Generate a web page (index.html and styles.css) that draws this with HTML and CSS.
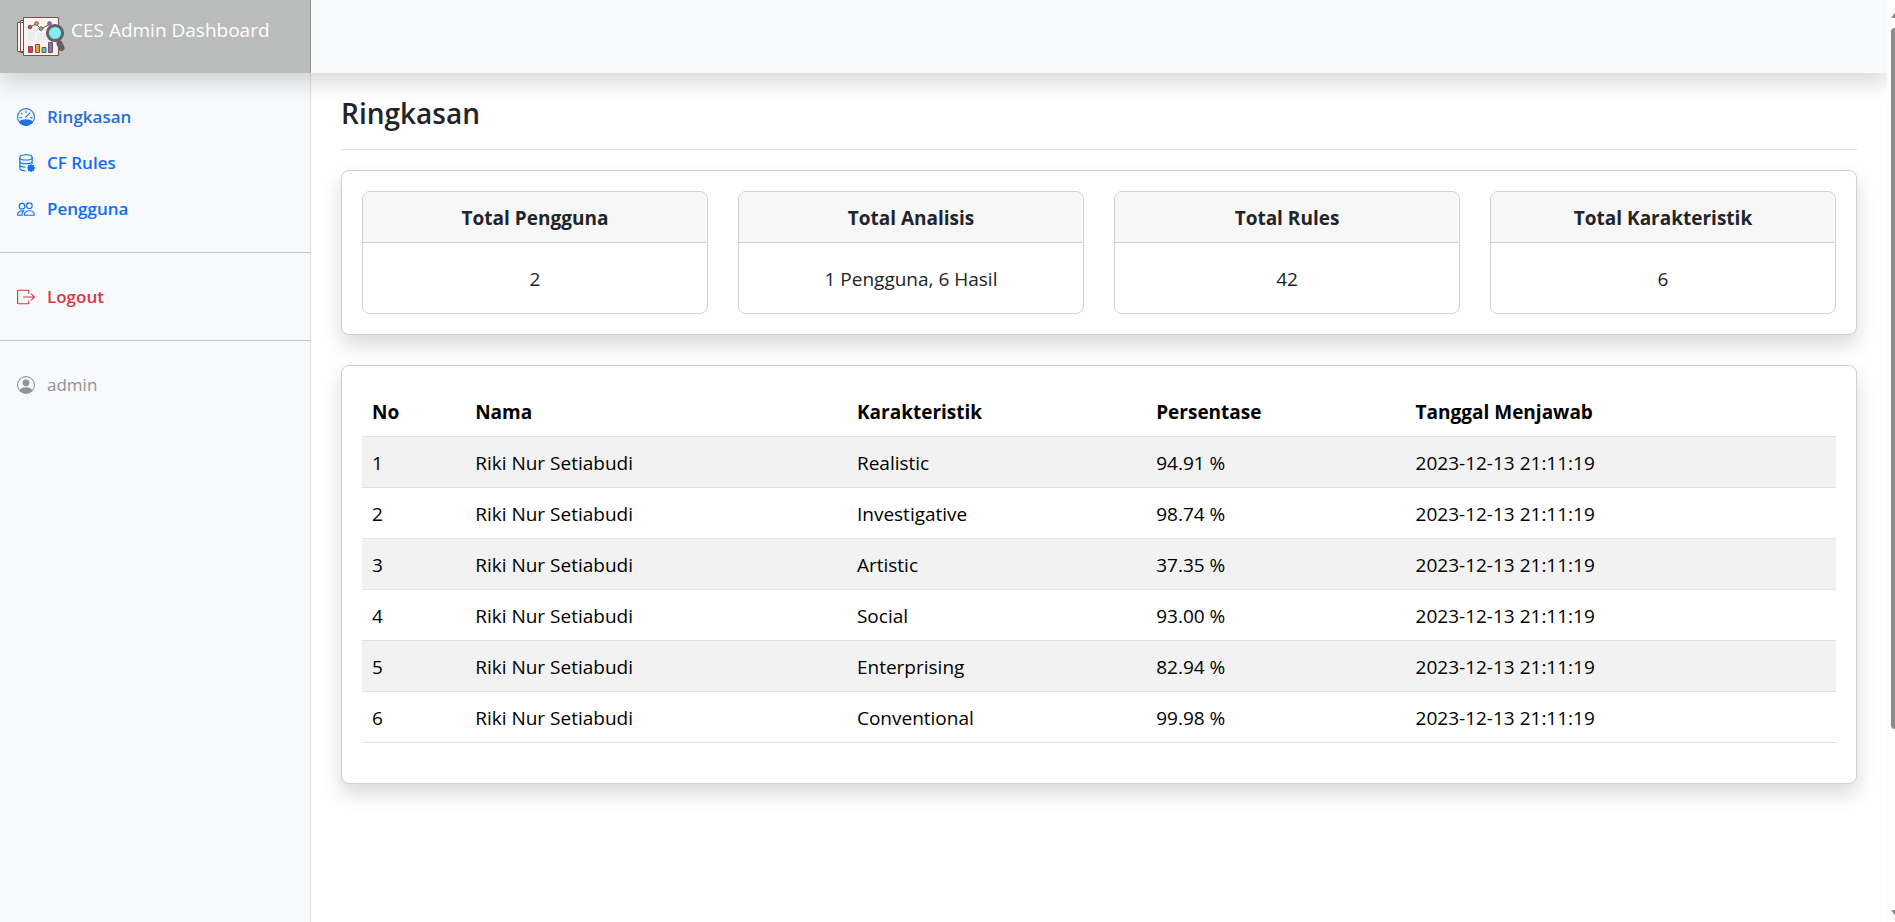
FILE: index.html
```html
<!DOCTYPE html>
<html lang="id">
<head>
<meta charset="utf-8">
<title>CES Admin Dashboard</title>
<link rel="stylesheet" href="styles.css">
</head>
<body>
<div class="page">
  <header class="topbar">
    <a class="brand" href="#">
      <svg class="brand-logo" viewBox="0 0 50 40" aria-hidden="true">
        <g fill="#f7f3f3" stroke="#7f4d4a" stroke-width="1">
          <path d="M1.500 5.500h6v29h-6zM4.500 3.500h6v32h-6z"/>
          <path d="M7.500.5h35v38h-35z"/>
        </g>
        <path d="M12 15h7v9h-7zM21 16h11v7h-11z" fill="#ececee"/>
        <path d="M14 10l6-3 5 5 9-5" fill="none" stroke="#7f4d4a"/>
        <g stroke="#7f4d4a">
          <circle cx="14" cy="10" r="1.800" fill="#f0325a"/>
          <circle cx="20.500" cy="6.500" r="1.800" fill="#f59c32"/>
          <circle cx="25" cy="11.500" r="1.800" fill="#55c8b8"/>
          <circle cx="33.500" cy="6.500" r="1.800" fill="#4583f4"/>
          <path d="M12.500 29.500h4v6h-4z" fill="#f0325a"/>
          <path d="M19.500 27.500h4v8h-4z" fill="#f59c32"/>
          <path d="M26 30.500h4v5h-4z" fill="#55c8b8"/>
          <path d="M32.500 25.500h4v10h-4z" fill="#4583f4"/>
        </g>
        <path d="M43.500 26.500l2 4.500" stroke="#7f4d4a" stroke-width="6" stroke-linecap="round"/>
        <path d="M43.500 26.500l2 4.500" stroke="#5d6573" stroke-width="4" stroke-linecap="round"/>
        <circle cx="39" cy="16" r="7.200" fill="#83efec" stroke="#7f4d4a" stroke-width="3.800"/>
        <circle cx="39" cy="16" r="7.200" fill="#83efec" stroke="#5d6573" stroke-width="2.200"/>
      </svg>
      <span>CES Admin Dashboard</span>
    </a>
  </header>
  <div class="columns">
    <nav class="sidebar" aria-label="Menu">
      <ul class="menu">
        <li><a class="menu-link active" href="#">
          <svg class="icon" viewBox="0 0 16 16" aria-hidden="true"><circle cx="8" cy="8" r="7.500" fill="none" stroke="currentColor"/><path d="M1.600 12C5 9.200 11 9.200 14.400 12A7.500 7.500 0 0 1 1.600 12z"/><path d="M8 2.500v2M3.500 4.500l1.300 1.200M2.200 8.500h2M11.800 8.500h2M7.500 8.500l4.200-4.300" fill="none" stroke="currentColor"/></svg>
          Ringkasan</a></li>
        <li><a class="menu-link" href="#">
          <svg class="icon" viewBox="0 0 16 16" aria-hidden="true"><g fill="none" stroke="currentColor"><ellipse cx="8" cy="3" rx="5.500" ry="2.300"/><path d="M2.500 3v9.500c0 1.300 2 2.400 5 2.500M13.500 3v5.700M2.500 6.200C2.500 7.700 5 8.700 8 8.700s5.500-1 5.500-2.500M2.500 9.300c0 1.400 2 2.400 5 2.500"/></g><circle cx="12.500" cy="12.500" r="2.700"/><path d="M12.500 9v7M9 12.500h7M10 10l5 5M15 10l-5 5" stroke="currentColor" stroke-width="1.300"/></svg>
          CF Rules</a></li>
        <li><a class="menu-link" href="#">
          <svg class="icon" viewBox="0 0 16 16" aria-hidden="true"><path d="M15 14s1 0 1-1-1-4-5-4-5 3-5 4 1 1 1 1zm-7.978-1L7 12.996c.001-.264.167-1.030.760-1.720C8.312 10.629 9.282 10 11 10c1.717 0 2.687.630 3.240 1.276.593.690.758 1.457.760 1.720l-.008.002-.014.002zM11 7a2 2 0 1 0 0-4 2 2 0 0 0 0 4m3-2a3 3 0 1 1-6 0 3 3 0 0 1 6 0M6.936 9.280a6 6 0 0 0-1.230-.247A7 7 0 0 0 5 9c-4 0-5 3-5 4q0 1 1 1h4.216A2.240 2.240 0 0 1 5 13c0-1.010.377-2.042 1.090-2.904.243-.294.526-.569.846-.816M4.920 10A5.500 5.500 0 0 0 4 13H1c0-.260.164-1.030.760-1.724.545-.636 1.492-1.256 3.160-1.275ZM1.500 5.500a3 3 0 1 1 6 0 3 3 0 0 1-6 0m3-2a2 2 0 1 0 0 4 2 2 0 0 0 0-4"/></svg>
          Pengguna</a></li>
      </ul>
      <ul class="menu">
        <li><a class="menu-link danger" href="#">
          <svg class="icon" viewBox="0 0 16 16" aria-hidden="true"><path d="M10.500 5V2.500a.5.500 0 0 0-.5-.5H1a.5.500 0 0 0-.5.500v11a.5.500 0 0 0 .5.500h9a.5.500 0 0 0 .5-.5V11M5.500 8h10M12.500 5l3 3-3 3" fill="none" stroke="currentColor"/></svg>
          Logout</a></li>
      </ul>
      <ul class="menu">
        <li><span class="menu-link muted">
          <svg class="icon" viewBox="0 0 16 16" aria-hidden="true"><path d="M11 6a3 3 0 1 1-6 0 3 3 0 0 1 6 0"/><path fill-rule="evenodd" d="M0 8a8 8 0 1 1 16 0A8 8 0 0 1 0 8m8-7a7 7 0 0 0-5.468 11.370C3.242 11.226 4.805 10 8 10s4.757 1.225 5.468 2.370A7 7 0 0 0 8 1"/></svg>
          admin</span></li>
      </ul>
    </nav>
    <main class="content">
      <h1 class="title">Ringkasan</h1>
      <section class="panel stats">
        <article class="stat"><h2 class="stat-name">Total Pengguna</h2><p class="stat-value">2</p></article>
        <article class="stat"><h2 class="stat-name">Total Analisis</h2><p class="stat-value">1 Pengguna, 6 Hasil</p></article>
        <article class="stat"><h2 class="stat-name">Total Rules</h2><p class="stat-value">42</p></article>
        <article class="stat"><h2 class="stat-name">Total Karakteristik</h2><p class="stat-value">6</p></article>
      </section>
      <section class="panel results">
        <table class="table">
          <thead><tr><th class="col-no">No</th><th class="col-name">Nama</th><th class="col-trait">Karakteristik</th><th class="col-percent">Persentase</th><th>Tanggal Menjawab</th></tr></thead>
          <tbody>
            <tr><td>1</td><td>Riki Nur Setiabudi</td><td>Realistic</td><td>94.91 %</td><td>2023-12-13 21:11:19</td></tr>
            <tr><td>2</td><td>Riki Nur Setiabudi</td><td>Investigative</td><td>98.74 %</td><td>2023-12-13 21:11:19</td></tr>
            <tr><td>3</td><td>Riki Nur Setiabudi</td><td>Artistic</td><td>37.35 %</td><td>2023-12-13 21:11:19</td></tr>
            <tr><td>4</td><td>Riki Nur Setiabudi</td><td>Social</td><td>93.00 %</td><td>2023-12-13 21:11:19</td></tr>
            <tr><td>5</td><td>Riki Nur Setiabudi</td><td>Enterprising</td><td>82.94 %</td><td>2023-12-13 21:11:19</td></tr>
            <tr><td>6</td><td>Riki Nur Setiabudi</td><td>Conventional</td><td>99.98 %</td><td>2023-12-13 21:11:19</td></tr>
          </tbody>
        </table>
      </section>
    </main>
  </div>
</div>
<div class="scroll" aria-hidden="true">
  <svg class="scroll-arrow" viewBox="0 0 8 8"><path d="M4 8L9 1v7z"/></svg>
  <div class="scroll-thumb"></div>
  <svg class="scroll-arrow" viewBox="0 0 8 8"><path d="M4 0h5v7z"/></svg>
</div>
</body>
</html>
```
FILE: styles.css
```css
* { box-sizing: border-box; }
body {
  margin: 0;
  height: 100vh;
  display: flex;
  overflow: hidden;
  background: #fff;
  color: #212529;
  font: 19px/30px "Open Sans", "Noto Sans", sans-serif;
}
h1, h2, p, ul { margin: 0; padding: 0; }
ul { list-style: none; }
a { text-decoration: none; }

.page { flex: 1; min-width: 0; display: flex; flex-direction: column; overflow: hidden; }
.topbar {
  position: relative;
  z-index: 1;
  display: flex;
  background: #f8f9fb;
  box-shadow: 0 10px 20px rgba(0, 0, 0, .15);
}
.brand {
  display: flex;
  align-items: flex-start;
  gap: 5px;
  width: 311px;
  height: 73px;
  padding: 15px 16px;
  background: #babcbb;
  border-right: 1px solid #8b8d8e;
  color: #fff;
}
.brand-logo { width: 50px; height: 40px; margin-top: 2px; }

.columns { flex: 1; display: flex; }
.sidebar {
  width: 311px;
  padding-top: 21px;
  background: #f8f9fb;
  border-right: 1px solid #dee2e6;
}
.menu { padding-bottom: 20px; }
.menu + .menu { padding-top: 21px; border-top: 1px solid #c0c3c6; }
.menu-link {
  display: flex;
  align-items: center;
  gap: 12px;
  height: 46px;
  padding: 0 17px;
  color: #0d6efd;
  font-size: 17px;
  font-weight: 600;
}
.menu-link.active { color: #2470dc; }
.menu-link.danger { color: #dc3545; }
.menu-link.muted { color: #909295; font-weight: 400; }
.icon { width: 18px; height: 18px; fill: currentColor; }

.content { flex: 1; min-width: 0; padding: 20px 30px; }
.title {
  padding-bottom: 16px;
  margin-bottom: 20px;
  border-bottom: 1px solid #dee2e6;
  font-size: 28px;
  font-weight: 600;
  line-height: 40px;
}
.panel {
  padding: 20px;
  border: 1px solid #cfd0d0;
  border-radius: 8px;
  background: #fff;
  box-shadow: 0 10px 20px rgba(0, 0, 0, .15);
}
.panel + .panel { margin-top: 30px; }
.stats { display: grid; grid-template-columns: repeat(4, 1fr); gap: 30px; }
.stat { border: 1px solid #cfd0d0; border-radius: 8px; overflow: hidden; text-align: center; }
.stat-name {
  padding: 11px 10px 9px;
  border-bottom: 1px solid #cfd0d0;
  background: #f7f7f7;
  font-size: 19px;
  font-weight: 700;
}
.stat-value { padding: 21px 20px 19px; }

.results { padding-bottom: 40px; }
.table { width: 100%; border-collapse: collapse; table-layout: fixed; color: #000; }
.table th, .table td {
  padding: 11px 10px 9px;
  border-bottom: 1px solid #dee2e6;
  text-align: left;
}
.table th { font-weight: 700; }
.table tbody tr:nth-child(odd) { background: #f2f2f2; }
.col-no { width: 7%; }
.col-name { width: 25.9%; }
.col-trait { width: 20.3%; }
.col-percent { width: 17.6%; }

.scroll {
  width: 8px;
  display: flex;
  flex-direction: column;
  padding: 10px 0 4px 0;
  background: #fcfcfc;
}
.scroll-arrow { width: 8px; height: 8px; fill: #8b8b8b; }
.scroll-thumb { height: 76vh; margin: 10px 0 auto 4px; border-radius: 4px 0 0 4px; background: #8b8b8b; }
```
